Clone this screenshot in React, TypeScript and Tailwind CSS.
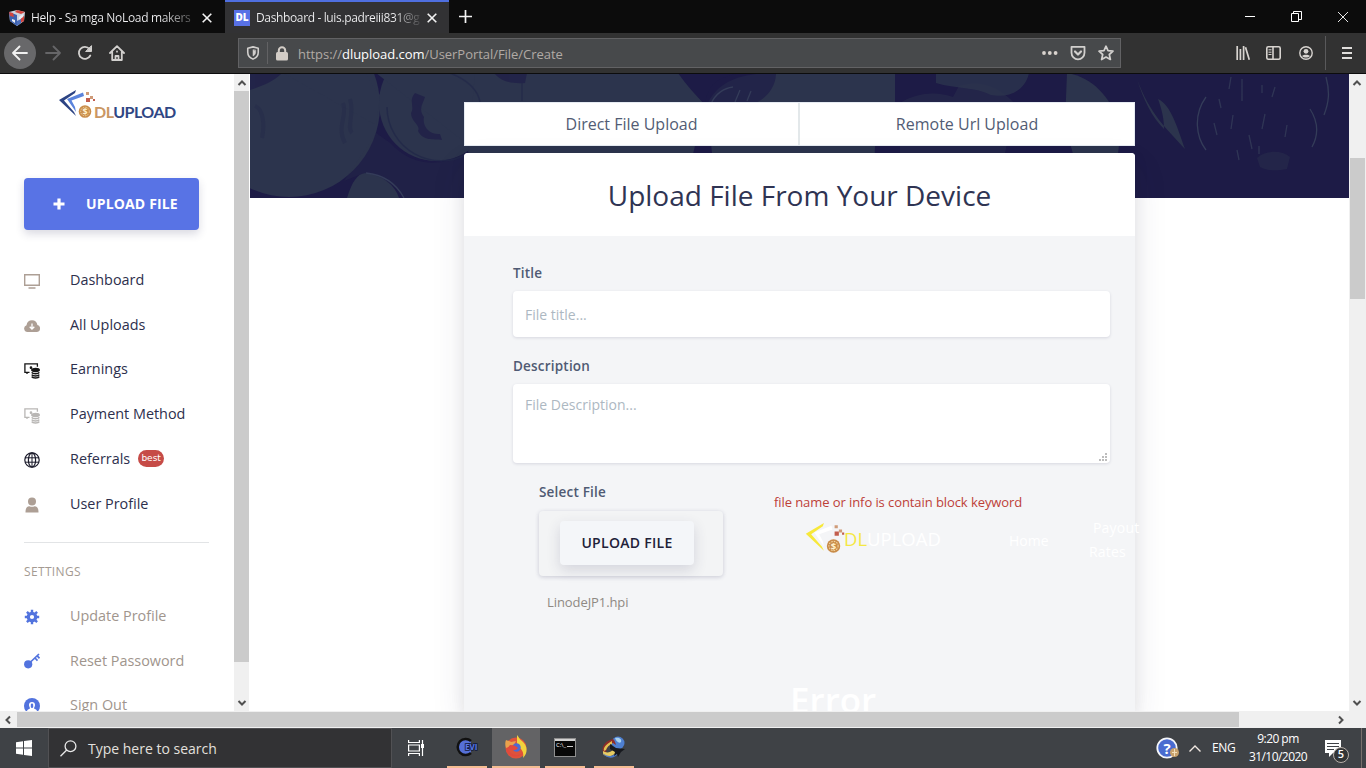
import type { ReactNode } from 'react';
import clsx from 'clsx';

type Direction = 'up' | 'down' | 'left' | 'right';

const arrowPaths: Record<Direction, string> = {
  up: 'M1.5 7 5 3.5 8.5 7',
  down: 'M1.5 3 5 6.5 8.5 3',
  left: 'M7 1.5 3.5 5 7 8.5',
  right: 'M3 1.5 6.5 5 3 8.5',
};

const ScrollArrow = ({ direction }: { direction: Direction }) => (
  <div className="flex h-[17px] w-[16px] shrink-0 items-center justify-center">
    <svg width="10" height="10" viewBox="0 0 10 10" fill="none" stroke="#505050" strokeWidth="2">
      <path d={arrowPaths[direction]} />
    </svg>
  </div>
);

/* Browser chrome */

const TabClose = () => (
  <svg width="10" height="10" viewBox="0 0 10 10" stroke="#f4f4f4" strokeWidth="1.6" className="shrink-0">
    <path d="M.7.7 9.3 9.3M9.3.7.7 9.3" />
  </svg>
);

const TabBar = () => (
  <div className="flex h-[33px] shrink-0 bg-[#0c0c0c] text-[12px] text-[#f2f2f4]">
    <div className="flex w-[225px] items-center pt-[2px] pl-[9px]">
      <svg width="16" height="16" viewBox="0 0 16 16" className="shrink-0">
        <path d="M0 2 8 0l8 2-1 9-7 5-7-5Z" fill="#cfd3dd" />
        <path d="m0 2 8 3v11l-7-5Z" fill="#3d62b0" />
        <path d="m8 0 8 2-4 2-6-2ZM0 2l4 1 1 4-4-1ZM12 8l3-2v5l-4 2Z" fill="#d2453e" />
        <path d="m10 7 4-3v3l-4 3ZM3 9l3 1v3l-3-2Z" fill="#eceef4" />
        <path d="m8 11 4-2v4l-4 3Z" fill="#4b6dba" />
      </svg>
      <span className="ml-[6px] w-[162px] shrink-0 bg-linear-to-r from-[#f2f2f4] from-80% to-[#4a4a4a] bg-clip-text tracking-[-0.32px] whitespace-nowrap text-transparent">
        Help - Sa mga NoLoad makers
      </span>
      <span className="ml-[9px]">
        <TabClose />
      </span>
    </div>
    <div className="flex w-[224px] items-center border-t-2 border-[#4f6fe0] bg-[#323234] pl-[9px]">
      <span className="flex h-4 w-4 shrink-0 items-center justify-center bg-[#5871e6] text-[10px] font-extrabold text-white">
        DL
      </span>
      <span className="ml-[6px] w-[164px] shrink-0 bg-linear-to-r from-[#f2f2f4] from-84% to-[#4a4a4c] bg-clip-text tracking-[-0.36px] whitespace-nowrap text-transparent">
        Dashboard - luis.padreiii831@g
      </span>
      <span className="ml-[7px]">
        <TabClose />
      </span>
    </div>
    <div className="flex flex-1 items-center pl-[10px]">
      <svg width="13" height="13" viewBox="0 0 13 13" stroke="#f4f4f4" strokeWidth="1.7">
        <path d="M6.5 0v13M0 6.5h13" />
      </svg>
    </div>
    <div className="flex items-center gap-[36px] pr-[18px]">
      <svg width="10" height="10" viewBox="0 0 10 10" stroke="#fff">
        <path d="M0 4.5h10" />
      </svg>
      <svg width="11" height="11" viewBox="0 0 11 11" fill="none" stroke="#fff">
        <path d="M.5 2.5h7v8h-7ZM2.5 2.5v-2h8v8h-3" />
      </svg>
      <svg width="10" height="10" viewBox="0 0 10 10" stroke="#fff" strokeWidth=".9">
        <path d="m0 0 10 10M10 0 0 10" />
      </svg>
    </div>
  </div>
);

const ChromeIcon = ({ children, size = 16, color = '#d2d0ce' }: { children: ReactNode; size?: number; color?: string }) => (
  <svg
    width={size}
    height={size}
    viewBox="0 0 16 16"
    fill="none"
    stroke={color}
    strokeWidth="1.8"
    strokeLinecap="round"
    strokeLinejoin="round"
    className="shrink-0"
  >
    {children}
  </svg>
);

const NavBar = () => (
  <div className="flex h-[41px] shrink-0 items-center border-b border-[#0c0c0d] bg-[#323232] pl-[4px]">
    <div className="flex h-8 w-8 items-center justify-center rounded-full bg-[#68686a]">
      <ChromeIcon color="#f1f1f1">
        <path d="M15 8H1M7.500 1.500 1 8l6.500 6.500" />
      </ChromeIcon>
    </div>
    <div className="ml-[9px] flex gap-4">
      <ChromeIcon color="#666668">
        <path d="M1 8h14M8.500 1.500 15 8l-6.500 6.500" />
      </ChromeIcon>
      <ChromeIcon>
        <path d="M13.300 10.500A6 6 0 1 1 12.500 4" />
        <path d="M14.500 1v5.500H9Z" fill="#d2d0ce" strokeWidth="1" />
      </ChromeIcon>
      <ChromeIcon>
        <path d="M1 8 8 1.200 15 8M3.200 7v8h9.600V7" />
        <path d="M8 6.500v.2M6.500 15v-4h3v4" />
      </ChromeIcon>
    </div>
    <div className="ml-[113px] flex h-[30px] w-[883px] items-center border border-[#626264] bg-[#47494b] pl-[7px]">
      <ChromeIcon size={14}>
        <path d="M8 1 2 2.500v4.500c0 4 2.500 6.500 6 8 3.500-1.500 6-4 6-8V2.500Z" />
        <path d="M8 4.500v7C9.800 10.500 11 9 11 7V5Z" fill="#d2d0ce" strokeWidth=".6" />
      </ChromeIcon>
      <span className="ml-[7px] h-[22px] w-px bg-[#626264]" />
      <svg width="12" height="15" viewBox="0 0 12 15" className="ml-[8px]">
        <rect y="6" width="12" height="8.500" rx="1.500" fill="#d3cdc7" />
        <path d="M2.800 7V4.500a3.200 3.200 0 0 1 6.400 0V7" fill="none" stroke="#d3cdc7" strokeWidth="2" />
      </svg>
      <span className="ml-[10px] flex-1 pt-[3px] text-[13px] tracking-[-0.04px] whitespace-nowrap text-[#b1aaa5]">
        https://<span className="text-white">dlupload.com</span>/UserPortal/File/Create
      </span>
      <svg width="16" height="4" viewBox="0 0 16 4" fill="#d9d3ce">
        <circle cx="2" cy="2" r="1.900" />
        <circle cx="7.800" cy="2" r="1.900" />
        <circle cx="13.600" cy="2" r="1.900" />
      </svg>
      <span className="ml-[12px]">
        <ChromeIcon>
          <path d="M1.500 1.800h13v6a6.500 6.500 0 0 1-13 0Z" />
          <path d="M5 6.500 8 9.500l3-3" strokeWidth="2.200" />
        </ChromeIcon>
      </span>
      <span className="mr-[6px] ml-[12px]">
        <ChromeIcon>
          <path d="m8 1.200 2 4.500 5 .5-3.700 3.300 1.100 5L8 12l-4.400 2.500 1.100-5L1 6.200l5-.5Z" strokeWidth="1.700" />
        </ChromeIcon>
      </span>
    </div>
    <div className="flex flex-1 items-center justify-end">
      <svg width="14" height="14" viewBox="0 0 14 14" stroke="#d8d4d0" strokeWidth="1.700">
        <path d="M1.200 0v14M4.400 3v11M7.600 0v14M9.500 1.200l3.800 12.600" />
      </svg>
      <svg width="15" height="14" viewBox="0 0 15 14" fill="none" stroke="#d8d4d0" strokeWidth="1.600" className="ml-[16px]">
        <rect x=".8" y=".8" width="13.400" height="12.400" rx="1.500" />
        <path d="M7 1v12" />
        <path d="M2.500 3.800h3M2.500 6.200h3M2.500 8.500h3" strokeWidth="1" />
      </svg>
      <svg width="14" height="14" viewBox="0 0 14 14" fill="none" stroke="#d8d4d0" strokeWidth="1.400" className="ml-[18px]">
        <circle cx="7" cy="7" r="6.200" />
        <circle cx="7" cy="5.300" r="2.400" fill="#d8d4d0" stroke="none" />
        <path d="M3 10c2-1.700 6-1.700 8 0-2 2-6 2-8 0Z" fill="#d8d4d0" stroke="none" />
      </svg>
      <span className="ml-[12px] h-[34px] w-px bg-[#59595b]" />
      <svg width="10" height="12" viewBox="0 0 10 12" stroke="#e0dedc" strokeWidth="2" className="mr-[14px] ml-[16px]">
        <path d="M0 1h10M0 6h10M0 11h10" />
      </svg>
    </div>
  </div>
);

/* Site logo */

const LogoMark = ({ outer, inner, className }: { outer: string; inner: string; className?: string }) => (
  <svg viewBox="0 0 36 30" className={className}>
    <path d="M17 0 0 10l17 16-2-4L5 10.500 16 3Z" fill={outer} />
    <path d="M24 2.500 8 9l9 13-1-5-3.500-6.500L25 6Z" fill={inner} />
    <circle cx="26" cy="21.500" r="6.300" fill="#c98c49" />
    <circle cx="26" cy="21.500" r="4.300" fill="none" stroke="#f1d4a0" strokeWidth="1" strokeDasharray="1.500 1" />
    <text x="26" y="25" textAnchor="middle" fontSize="9" fontWeight="700" fill="#fff0cc">
      $
    </text>
    <path d="M27 2h3v3h-3ZM31 6h3v3h-3Z" fill="#cf9b78" />
    <path d="M27 8h4v4h-4ZM34 9h2v2h-2Z" fill="#c25d4d" />
  </svg>
);

/* Sidebar */

const CashIcon = ({ color }: { color: string }) => (
  <svg width="16" height="16" viewBox="0 0 16 16" fill="none" stroke={color} strokeWidth="1.300">
    <path d="M5.500 9.300H.9V.8h12.500v3M3 9.300V11" />
    <circle cx="7" cy="4.700" r=".7" fill={color} />
    <ellipse cx="11.500" cy="7" rx="3.800" ry="1.500" fill={color} />
    <path d="M7.700 9.400c1 1.800 6.600 1.800 7.600 0M7.700 11.600c1 1.800 6.600 1.800 7.600 0M7.700 13.600c1 1.800 6.600 1.800 7.600 0" strokeWidth="1.500" />
  </svg>
);

const menuItems = [
  {
    label: 'Dashboard',
    icon: (
      <svg width="16" height="15" viewBox="0 0 16 15" fill="none" stroke="#ad9f95" strokeWidth="1.400">
        <path d="M.7.7h14.600v10.600H.7ZM4.500 14h7" />
      </svg>
    ),
  },
  {
    label: 'All Uploads',
    icon: (
      <svg width="16" height="12" viewBox="0 0 16 12" fill="#ad9f95">
        <path d="M3.500 12a3.500 3.500 0 0 1-1-6.800C3 2 5 .3 8 .3s5 2 5.400 4.800A3.500 3.500 0 0 1 12.500 12Z" />
        <path d="M8 3.500v5M5.700 6.700 8 9l2.300-2.300" stroke="#fff" strokeWidth="1.300" fill="none" />
      </svg>
    ),
  },
  { label: 'Earnings', icon: <CashIcon color="#151515" /> },
  { label: 'Payment Method', icon: <CashIcon color="#b9b7b5" /> },
  {
    label: 'Referrals',
    badge: 'best',
    icon: (
      <svg width="16" height="16" viewBox="0 0 16 16" fill="none" stroke="#1b1b2b" strokeWidth="1.200">
        <circle cx="8" cy="8" r="7.200" />
        <ellipse cx="8" cy="8" rx="3.600" ry="7.200" />
        <path d="M8 1v14M1 5.800h14M1 10.200h14" strokeWidth="1" />
      </svg>
    ),
  },
  {
    label: 'User Profile',
    icon: (
      <svg width="16" height="16" viewBox="0 0 16 16" fill="#ad9f95">
        <circle cx="8" cy="4.500" r="4" />
        <path d="M1.500 15.500c0-4 1-6 4-6.300 1.500.8 3.500.8 5 0 3 .3 4 2.300 4 6.300Z" />
      </svg>
    ),
  },
];

const settingsItems = [
  {
    label: 'Update Profile',
    icon: (
      <svg width="16" height="16" viewBox="0 0 16 16" fill="none" stroke="#5273de">
        <circle cx="8" cy="8" r="3.700" strokeWidth="3.200" />
        <path d="M8 .8v2.500M8 12.700v2.500M.8 8h2.500M12.700 8h2.500M2.900 2.900l1.800 1.800M11.300 11.300l1.800 1.800M13.100 2.900l-1.800 1.800M4.700 11.300l-1.800 1.800" strokeWidth="2.400" />
      </svg>
    ),
  },
  {
    label: 'Reset Passoword',
    icon: (
      <svg width="16" height="16" viewBox="0 0 16 16" fill="none" stroke="#5273de">
        <circle cx="4.200" cy="11.300" r="4.100" fill="#5273de" stroke="none" />
        <path d="M6 9.500 15 1M10.500 4.500l3 3.200M13 2.700l2.500 2.600" strokeWidth="1.700" />
      </svg>
    ),
  },
  {
    label: 'Sign Out',
    icon: (
      <svg width="16" height="16" viewBox="0 0 16 16" fill="#5273de">
        <circle cx="8" cy="8" r="8" />
        <path d="M5 7a3 3 0 0 1 6 0c0 1.500-1 2.500-1 3.500 1.500.5 2.500 1 3 2.500H3c.5-1.500 1.500-2 3-2.500C6 9.500 5 8.500 5 7Z" fill="#fff" />
        <rect x="6.800" y="5.500" width="2.400" height="4.500" rx="1.200" />
      </svg>
    ),
  },
];

const Sidebar = () => (
  <aside className="flex w-[234px] shrink-0 flex-col overflow-hidden bg-white pl-6">
    <div className="mt-[16px] ml-[35px] flex h-[32px] shrink-0">
      <LogoMark outer="#2c4383" inner="#5a83dc" className="h-[30px] w-[36px] shrink-0" />
      <span className="mt-[12px] -ml-px h-5 font-[Lato] text-[16px] leading-5 font-bold tracking-[-0.5px] text-[#2f4684]">
        <span className="text-[#ca9763]">DL</span>UPLOAD
      </span>
    </div>
    <button className="mt-[56px] flex h-[52px] w-[175px] shrink-0 items-center rounded bg-[#5873e5] pl-[29px] text-[14px] font-bold text-white shadow-[0_4px_8px_rgba(50,50,93,0.18)]">
      <svg width="12" height="12" viewBox="0 0 12 12" stroke="#fff" strokeWidth="3.200">
        <path d="M6 .5v11M.5 6h11" />
      </svg>
      <span className="ml-[21px] pb-px tracking-[0.15px] whitespace-nowrap">UPLOAD FILE</span>
    </button>
    <nav className="mt-[27px] flex shrink-0 flex-col pt-[0.300px] text-[14.400px] text-[#2d2f4d]">
      {menuItems.map((item) => (
        <div key={item.label} className="flex h-[44.800px] items-center">
          <span className="flex w-[46px] pt-[3px]">{item.icon}</span>
          <span>{item.label}</span>
          {item.badge && (
            <span className="ml-[8px] flex h-[17px] w-[26px] items-center justify-center rounded-full bg-[#c64b47] font-['DejaVu_Sans'] text-[9px] leading-none text-white">
              {item.badge}
            </span>
          )}
        </div>
      ))}
    </nav>
    <hr className="mt-[16px] w-[185px] shrink-0 border-[#e2e4e6]" />
    <h6 className="mt-[19px] h-5 shrink-0 text-[12px] leading-5 tracking-[0.35px] text-[#a49a92]">SETTINGS</h6>
    <nav className="mt-[12px] flex shrink-0 flex-col text-[14.400px] text-[#a0958d]">
      {settingsItems.map((item) => (
        <div key={item.label} className="flex h-[44.400px] shrink-0 items-center">
          <span className="flex w-[46px] pt-[1px]">{item.icon}</span>
          <span>{item.label}</span>
        </div>
      ))}
    </nav>
  </aside>
);

const SidebarScrollbar = () => (
  <div className="flex w-[16px] shrink-0 flex-col border-r border-white bg-[#f0f0f0]">
    <ScrollArrow direction="up" />
    <div className="h-[571px] w-[15px] bg-[#cbcbcb]" />
    <div className="flex flex-1 items-end">
      <ScrollArrow direction="down" />
    </div>
  </div>
);

/* Coins behind the upload form */

const Banner = () => (
  <svg width="1099" height="124" viewBox="0 1 1099 124" className="col-start-1 row-start-1 bg-[#1d1b46]">
    <g fill="#2c344d">
      <circle cx="39" cy="33" r="91" />
      <path d="M33 0h83c4 9 8 16 14 22l-4 30Z" />
      <ellipse cx="186" cy="30" rx="57" ry="58" />
      <path d="M126 0h154v81h-50Z" />
      <path d="M97 125c5-16 10-24 18-25 18 2 30 12 34 25Z" />
      <path d="M225 0h203c8 12 18 22 27 32l-12 49H218Z" />
      <path d="M457 32c10-22 30-32 68-32h120v29c-20 0-20 51-20 51H462Z" />
      <path d="M650 30c20-12 38-11 53-6l6-11c18-6 38-2 56 18l-10 49H650Z" opacity=".45" />
      <path d="M686 0h93c-4 18-20 25-38 22-15-8-35-6-55-12Z" opacity=".8" />
      <path d="M817 0c28 5 44 26 54 54l-3 27h-45l-8-30Z" />
      <path d="M887 6c13 36 31 51 48 70-8-22-14-44-27-50 4 11 6 20 6 30-12-12-20-28-27-50Z" />
      <path d="M1007 85c8-8 25-8 33-1l-3 12c-10 2-20 2-27-2Z" opacity=".4" />
      <path d="M126 60 140 70c20 22 50 26 74 10v45h-60c-8-12-24-24-40-25l-20 8Z" opacity=".25" />
    </g>
    <g fill="#1d1b46" opacity=".65">
      <path d="M0 0h32C25 8 12 13 0 17ZM244 0h33l-2 10c-12 1-24-1-31-10ZM455 32c3-22 14-28 36-32h35c0 18-16 32-30 32Z" />
      <path d="M165 20c-7 8 0 13-4 20 0 9 10 12 7 18 5 10 15 8 24 9l-2-6c-10 1-18-7-16-17-6-8-1-13 1-20Z" />
    </g>
    <g fill="none" stroke="#222848" strokeWidth="1.500">
      <path d="M137 34a54 54 0 0 0 82 46" opacity=".8" />
      <path d="M200 0c20 8 28 18 30 29M272 10v18" opacity=".7" />
      <path d="M5 33c8 3 10 18 7 32M93 30c5 12-7 24 2 40M100 26c5 16-4 28 2 34" strokeWidth="4" opacity=".4" />
      <path d="M712 30v50M720 24v56M729 27v40M738 31v36" opacity=".6" />
    </g>
    <g fill="none" stroke="#343c59" strokeWidth="1.300">
      <path d="M116 100c20 2 31 12 38 25" />
      <path d="M461 31c4-10 13-16 22-17M485 29l5-12M497 28l4-10" />
      <path d="M956 24c-13 18-10 40 0 53M1076 4c4 15 3 25-2 38M1060 36c9 14 8 27 2 38" />
      <path d="m969 26 2 9m10-31-2 12m13-10v22m20-16v8m13-6-3 10m-58 26 3 12m16-20-2 14m18 6 3 14m13-35-3 15m25-4-2 12m-48 13 2 10m20-14v8" opacity=".8" />
    </g>
  </svg>
);

const fieldClass = 'rounded bg-white px-3 text-[14px] text-[#adb8c2] shadow-[0_1px_3px_rgba(50,50,93,0.15)]';
const labelClass = 'h-5 text-[13.500px] leading-5 font-semibold tracking-[0.2px] text-[#4f5a73]';

const OverlayHeader = () => (
  <div className="mt-[8px] ml-[31px] flex h-[46px] text-[14px] text-white">
    <LogoMark outer="#f7e83a" inner="#ffffff" className="mt-[3px] h-[32px] w-[40px] shrink-0" />
    <span className="mt-[7px] -ml-[1px] h-6 w-[165px] shrink-0 text-[18.500px] leading-6 whitespace-nowrap">
      <span className="text-[#f4e843]">DL</span>UPLOAD
    </span>
    <span className="mt-[11px] h-5 w-[80px] shrink-0 leading-5">Home</span>
    <span className="-mt-[4px] w-[56px] shrink-0 leading-6 tracking-[0.2px] whitespace-nowrap">
      <span className="ml-[4px]">Payout</span>
      <br />
      Rates
    </span>
  </div>
);

const UploadCard = () => (
  <section className="flex h-[558px] flex-col rounded-t bg-[#f4f5f7] shadow-[0_15px_35px_rgba(50,50,93,0.1),0_5px_15px_rgba(0,0,0,0.08)]">
    <header className="flex h-[83px] shrink-0 items-center justify-center rounded-t bg-white text-[28px] text-[#2f3453]">
      <h2 className="whitespace-nowrap">Upload File From Your Device</h2>
    </header>
    <div className="flex min-h-0 flex-1 flex-col pr-[25px] pl-[49px]">
      <label className={clsx('mt-[27px]', labelClass)}>Title</label>
      <div className={clsx('mt-[8px] flex h-[46px] shrink-0 items-center', fieldClass)}>File title...</div>
      <label className={clsx('mt-[19px]', labelClass)}>Description</label>
      <div className={clsx('mt-[8px] flex h-[79px] shrink-0 justify-between pt-[11px]', fieldClass)}>
        <span className="leading-5">File Description...</span>
        <svg width="8" height="8" viewBox="0 0 8 8" fill="#bdbdbd" className="-mr-[9px] mb-[2px] self-end">
          <path d="M6 0h2v2H6ZM3 3h2v2H3ZM6 3h2v2H6ZM0 6h2v2H0ZM3 6h2v2H3ZM6 6h2v2H6Z" />
        </svg>
      </div>
      <div className="flex shrink-0 pl-[26px]">
        <div className="flex w-[235px] shrink-0 flex-col">
          <label className={clsx('mt-[19px]', labelClass)}>Select File</label>
          <div className="mt-[9px] flex h-[65px] w-[184px] rounded bg-[#f3f4f5] pt-[10px] pl-[21px] shadow-[0_1px_4px_rgba(50,50,93,0.22)]">
            <button className="h-[44px] w-[134px] rounded bg-[#f4f6f9] pb-[2px] text-[14px] font-semibold tracking-[0.3px] whitespace-nowrap text-[#212138] shadow-[0_5px_14px_rgba(50,50,93,0.16)]">
              UPLOAD FILE
            </button>
          </div>
          <span className="mt-[16px] ml-[8px] h-5 text-[13px] leading-5 tracking-[-0.08px] text-[#8f8983]">LinodeJP1.hpi</span>
        </div>
        <div className="flex w-[390px] shrink-0 flex-col">
          <p className="mt-[29px] h-5 text-[13px] leading-5 tracking-[-0.08px] whitespace-nowrap text-[#bd4038]">
            file name or info is contain block keyword
          </p>
          <OverlayHeader />
          <h1 className="mt-[110px] ml-[16px] h-12 text-[35px] leading-[48px] font-semibold text-white">Error</h1>
        </div>
      </div>
    </div>
  </section>
);

const MainPanel = () => (
  <main className="grid h-[637px] flex-1 grid-cols-1 content-start overflow-hidden bg-white">
    <Banner />
    <div className="z-10 col-start-1 row-start-1 mt-[28px] ml-[214px] w-[671px]">
      <div className="flex h-[44px] border border-[#e6ebf2] bg-white text-[16px] text-[#525c74]">
        <div className="flex w-[335px] items-center justify-center border-r-2 border-[#e3e8ea]">Direct File Upload</div>
        <div className="flex flex-1 items-center justify-center">Remote Url Upload</div>
      </div>
      <div className="mt-[7px]">
        <UploadCard />
      </div>
    </div>
  </main>
);

const MainScrollbar = () => (
  <div className="flex w-[17px] shrink-0 flex-col bg-[#f0f0f0]">
    <ScrollArrow direction="up" />
    <div className="mt-[67px] ml-px h-[141px] w-[15px] bg-[#cbcbcb]" />
    <div className="flex flex-1 items-end">
      <ScrollArrow direction="down" />
    </div>
  </div>
);

const HorizontalScrollbar = () => (
  <div className="flex h-[17px] shrink-0 items-center bg-[#f0f0f0]">
    <ScrollArrow direction="left" />
    <div className="ml-px h-[15px] w-[1222px] bg-[#cbcbcb]" />
    <div className="mr-[17px] flex flex-1 justify-end">
      <ScrollArrow direction="right" />
    </div>
  </div>
);

/* Windows taskbar */

const TaskButton = ({ active, children }: { active?: boolean; children: ReactNode }) => (
  <div
    className={clsx(
      'flex h-full items-center justify-center border-b-2 border-[#f5bd92]',
      active ? 'w-[48px] bg-[#636365]' : 'w-[40px]',
    )}
  >
    {children}
  </div>
);

const Taskbar = () => (
  <footer className="flex h-[40px] shrink-0 items-center bg-[#3f4246] text-white">
    <div className="flex w-[48px] justify-center">
      <svg width="16" height="16" viewBox="0 0 16 16" fill="#fff">
        <path d="M0 2.200 7 1.200v6.300H0ZM8 1l8-1v7.500H8ZM0 8.500h7v6.300l-7-1ZM8 8.500h8V16l-8-1Z" />
      </svg>
    </div>
    <div className="flex h-[40px] w-[344px] items-center border border-[#515154] bg-[#323234] pl-[11px] text-[14px] text-[#e3e0de]">
      <svg width="17" height="17" viewBox="0 0 17 17" fill="none" stroke="#e8e8e8" strokeWidth="1.300">
        <circle cx="10.500" cy="6.200" r="5.400" />
        <path d="M6.700 10 .5 16.300" />
      </svg>
      <span className="ml-[11px] whitespace-nowrap">Type here to search</span>
    </div>
    <svg width="16" height="16" viewBox="0 0 16 16" fill="none" stroke="#fff" strokeWidth="1.200" className="ml-[16px]">
      <path d="M.6 0v2.500h10.800V0M.6 5h10.800v6H.6ZM.6 16v-2.500h10.800V16M14.500 0v16" />
      <path d="M14.500 4v4" strokeWidth="3" />
    </svg>
    <div className="ml-[23px] flex h-full">
      <TaskButton>
        <svg width="26" height="20" viewBox="0 0 26 20">
          <path d="M17 4A8 8 0 1 0 17 16" fill="#5570d8" stroke="#111" strokeWidth="2.500" />
          <text x="11" y="13" fontSize="8" fontWeight="700" fill="#5b7be6" stroke="#131a3e" strokeWidth="1.600" paintOrder="stroke">
            EVI
          </text>
        </svg>
      </TaskButton>
      <span className="w-[5px]" />
      <TaskButton active>
        <svg width="24" height="24" viewBox="0 0 24 24">
          <circle cx="12" cy="13" r="10.500" fill="#df533b" />
          <path d="M13 0c2 2 2 4 5 6 6 5 6 12 1 17 1-6-1-9-6-12Z" fill="#f3d23c" />
          <path d="M2 5c2 1 4 1 5 2l5-1-2 4-8 3C1 10 1 7 2 5Z" fill="#eba24c" />
          <circle cx="12.500" cy="12.500" r="4.200" fill="#4d6bd2" />
          <path d="M6 10c4 0 6 1 8 3-2 3-7 3-10 0 2 7 9 9 15 5-4 5-14 5-17-3Z" fill="#e2493d" />
        </svg>
      </TaskButton>
      <span className="w-[5px]" />
      <TaskButton>
        <svg width="22" height="19" viewBox="0 0 22 19">
          <path d="M0 0h22v19H0Z" fill="#8f8f8f" />
          <path d="M1 3h20v15H1Z" fill="#080808" />
          <path d="M1 1h20v2H1Z" fill="#d3d3d3" />
          <text x="2" y="9" fontSize="6" fill="#fff">
            C:\_
          </text>
          <path d="M13 8.500h6" stroke="#ccc" />
        </svg>
      </TaskButton>
      <span className="w-[9px]" />
      <TaskButton>
        <svg width="24" height="22" viewBox="0 0 24 22">
          <circle cx="16" cy="7" r="6.500" fill="#4e7fd0" />
          <path d="M13 2c4-1 7 1 6 4-2 2-5-1-6-4Z" fill="#a9d2ee" />
          <path d="M11 3C3 5-1 11 1 16l3 2c0-5 2-9 7-11l3 2c-1-3-1-4-3-6Z" fill="#8d2c28" />
          <path d="M10 5C4 8 1 12 2 15l2-1c1-3 3-5 6-6Z" fill="#e3c052" />
          <path d="M1 15c3 2 7 2 10-1l3 2c-3 5-10 6-13 2Z" fill="#e6cb62" />
          <path d="M1 17c4 4 10 4 14-1l1 2c-4 5-12 5-15-1Z" fill="#4b79c8" />
          <path d="m8 8 6 4 9 1-4 3-3 5-1-3-3 2 1-4-5-3Z" fill="#17191e" />
        </svg>
      </TaskButton>
    </div>
    <div className="flex h-full flex-1 items-center justify-end">
      <svg width="24" height="22" viewBox="0 0 24 22">
        <circle cx="11" cy="11" r="9.700" fill="#496bd0" stroke="#f5f6fa" strokeWidth="1.800" />
        <text x="11" y="16.500" textAnchor="middle" fontSize="15" fontWeight="700" fill="#fff">
          ?
        </text>
        <circle cx="18.500" cy="15.500" r="4.500" fill="#c8a16c" />
        <path d="M18.500 12v7M16 15.500h5" stroke="#f3dfbb" />
      </svg>
      <svg width="12" height="7" viewBox="0 0 12 7" fill="none" stroke="#f1e8e2" strokeWidth="1.400" className="ml-[9px]">
        <path d="M.5 6.500 6 1l5.500 5.500" />
      </svg>
      <span className="ml-[11px] w-[24px] text-[12px] tracking-[-0.3px]">ENG</span>
      <div className="ml-[11px] flex w-[62px] flex-col items-center text-[12px] leading-[18px] tracking-[-0.55px] whitespace-nowrap">
        <span>9:20 pm</span>
        <span>31/10/2020</span>
      </div>
      <div className="relative ml-[16px] h-[17px] w-[16px]">
        <svg width="16" height="17" viewBox="0 0 16 17">
          <path d="M0 0h16v13H8l-4 4v-4H0Z" fill="#fff" />
          <path d="M2 3.500h12M2 6.500h12M2 9.500h7" stroke="#3f4246" />
        </svg>
        <span className="absolute top-[7px] left-[8px] flex h-4 w-4 items-center justify-center rounded-full border border-[#b8afa9] bg-[#333536] text-[11px] font-semibold">
          5
        </span>
      </div>
      <span className="ml-[20px] h-full w-px bg-[#77706c]" />
      <span className="w-[4px]" />
    </div>
  </footer>
);

export default function App() {
  return (
    <div className="flex h-[768px] w-[1366px] flex-col overflow-hidden bg-white font-['Open_Sans','Noto_Sans',sans-serif]">
      <TabBar />
      <NavBar />
      <div className="flex h-[637px] shrink-0">
        <Sidebar />
        <SidebarScrollbar />
        <MainPanel />
        <MainScrollbar />
      </div>
      <HorizontalScrollbar />
      <Taskbar />
    </div>
  );
}
